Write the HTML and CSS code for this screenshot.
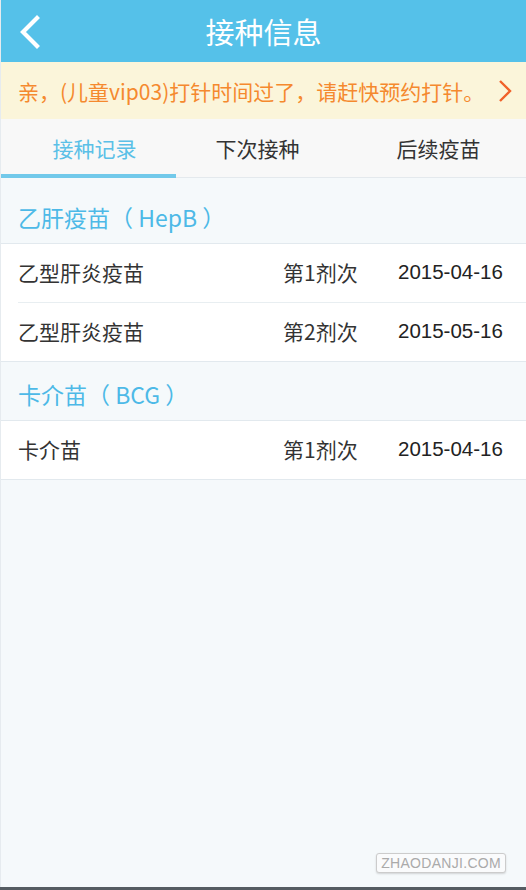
FILE: index.html
```html
<!DOCTYPE html>
<html lang="zh">
<head>
    <meta charset="UTF-8">
    <title>接种信息</title>
    <link rel="stylesheet" href="styles.css">
</head>
<body>
    <div class="page">
        <div class="topbar">
            <span class="back">
                <svg width="24" height="34" viewBox="0 0 24 34"><path d="M19 3 L5 17 L19 31" fill="none" stroke="#fff" stroke-width="4.2" stroke-linecap="square"/></svg>
            </span>
            <h1>接种信息</h1>
        </div>

        <div class="notice">
            <span class="notice-text">亲，(儿童vip03)打针时间过了，请赶快预约打针。</span>
            <svg width="14" height="24" viewBox="0 0 14 24"><path d="M2 2 L12 12 L2 22" fill="none" stroke="#f0612a" stroke-width="2.4"/></svg>
        </div>

        <div class="tabs">
            <div class="tab active"><span>接种记录</span></div>
            <div class="tab"><span>下次接种</span></div>
            <div class="tab"><span>后续疫苗</span></div>
        </div>

        <div class="group first">
            <div class="group-title">乙肝疫苗（ HepB ）</div>
            <div class="list">
                <div class="row">
                    <span class="name">乙型肝炎疫苗</span>
                    <span class="dose">第1剂次</span>
                    <span class="date">2015-04-16</span>
                </div>
                <div class="row">
                    <span class="name">乙型肝炎疫苗</span>
                    <span class="dose">第2剂次</span>
                    <span class="date">2015-05-16</span>
                </div>
            </div>
        </div>

        <div class="group">
            <div class="group-title">卡介苗（ BCG ）</div>
            <div class="list">
                <div class="row">
                    <span class="name">卡介苗</span>
                    <span class="dose">第1剂次</span>
                    <span class="date">2015-04-16</span>
                </div>
            </div>
        </div>

        <div class="watermark">ZHAODANJI.COM</div>
    </div>
    <div class="bottom-edge"></div>
</body>
</html>
```

FILE: styles.css
```css
* {
    margin: 0;
    padding: 0;
    box-sizing: border-box;
}

body {
    font-family: 'Liberation Sans', 'Noto Sans CJK SC', sans-serif;
    background: #f5f9fb;
    overflow: hidden;
}

.page {
    position: relative;
    height: 887px;
    border-left: 1px solid #e6ebef;
}

.topbar {
    height: 62px;
    background: #55c1e9;
    display: flex;
    align-items: center;
    position: relative;
}

.back {
    display: flex;
    padding-left: 17px;
    padding-top: 2px;
}

.topbar h1 {
    flex: 1;
    text-align: center;
    margin-right: 41px;
    color: #fff;
    font-size: 29px;
    font-weight: normal;
    font-family: 'Noto Sans CJK SC', sans-serif;
}

.notice {
    height: 57px;
    background: #fbf5da;
    display: flex;
    align-items: center;
    justify-content: space-between;
    padding: 0 14px 0 17px;
}

.notice-text {
    color: #f5892e;
    font-size: 21px;
    font-family: 'Noto Sans CJK SC', sans-serif;
}

.tabs {
    height: 59px;
    background: #f8f8f8;
    display: grid;
    grid-template-columns: 1fr 1fr 1fr;
    border-bottom: 1px solid #e4e9ed;
}

.tab {
    display: flex;
    align-items: center;
    justify-content: center;
    font-size: 21px;
    color: #333;
    border-bottom: 4px solid transparent;
    margin-bottom: -1px;
    padding-top: 3px;
}

.tab.active {
    color: #5bc0e7;
    border-bottom-color: #72c9ea;
}

.tab.active span {
    margin-left: 12px;
}

.tab:nth-child(2) span {
    margin-right: 12px;
}

.group-title {
    height: 58px;
    display: flex;
    align-items: center;
    padding-left: 17px;
    padding-top: 5px;
    color: #4db9e7;
    font-size: 23px;
    font-family: 'Noto Sans CJK SC', sans-serif;
}

.group.first .group-title {
    height: 65px;
    padding-top: 12px;
}

.list {
    background: #fff;
    border-top: 1px solid #e2e9ee;
    border-bottom: 1px solid #e2e9ee;
    padding-left: 17px;
}

.row {
    height: 58px;
    display: flex;
    align-items: center;
    font-size: 21px;
    color: #333;
    padding-bottom: 2px;
}

.row + .row {
    border-top: 1px solid #e8eef1;
    height: 59px;
}

.name {
    flex: 1;
    font-family: 'Noto Sans CJK SC', sans-serif;
}

.dose {
    width: 115px;
    font-family: 'Noto Sans CJK SC', sans-serif;
}

.date {
    width: 128px;
    color: #222;
    font-size: 20.5px;
}

.watermark {
    position: absolute;
    right: 20px;
    bottom: 14px;
    padding: 1px 4px;
    border: 1px solid #ccc;
    border-radius: 3px;
    background: #fafbfc;
    box-shadow: 0 1px 2px rgba(0,0,0,0.15);
    color: #aaa;
    font-size: 14px;
    letter-spacing: 0.3px;
}

.bottom-edge {
    height: 3px;
    background: #555c62;
}
```
